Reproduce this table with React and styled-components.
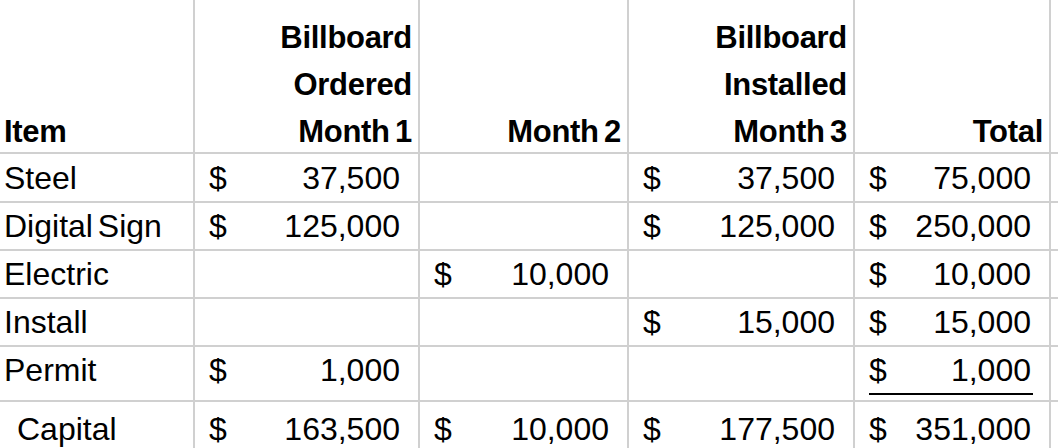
import React from 'react'
import styled, { createGlobalStyle, css } from 'styled-components'

const GlobalStyle = createGlobalStyle`
  html, body {
    margin: 0;
    padding: 0;
    background: #fff;
    overflow: hidden;
  }
  body {
    font-family: "Liberation Sans", Arial, sans-serif;
    color: #000;
  }
`;

const Sheet = styled.div`
  display: grid;
  grid-template-columns: 193px 223px 207px 224px 194px 1fr;
  grid-template-rows: 152px 47px 46px 46px 46px 53px 50px;
  gap: 2px;
  width: 1058px;
  background: #d0d0d0;
`;

const HeadCell = styled.div`
  background: #fff;
  display: flex;
  flex-direction: column;
  justify-content: flex-end;
  align-items: ${p => (p.$left ? 'flex-start' : 'flex-end')};
  padding: 0 6px 0 4px;
  font-weight: 700;
  font-size: 31px;
  line-height: 47px;
  letter-spacing: -0.3px;
`;

const HeadText = styled.div`
  margin-bottom: -3px;
  text-align: ${p => (p.$left ? 'left' : 'right')};
  word-spacing: -3px;
`;

const Cell = styled.div`
  background: #fff;
  display: flex;
  flex-direction: column;
  justify-content: flex-end;
  padding-bottom: ${p => (p.$tall ? 12 : 5)}px;
  font-size: 32px;
  line-height: 36px;
`;

const Label = styled.div`
  padding-left: ${p => (p.$indent ? 17 : 4)}px;
  white-space: nowrap;
  word-spacing: -4px;
`;

const Money = styled.div`
  display: flex;
  justify-content: space-between;
  margin: 0 16px 0 14px;
  padding-right: 2px;
  ${p => p.$underline && css`
    padding-bottom: 5px;
    margin-bottom: -7px;
    border-bottom: 2px solid #000;
  `}
`;

const rows = [
  { item: 'Steel', m1: '37,500', m3: '37,500', total: '75,000' },
  { item: 'Digital Sign', m1: '125,000', m3: '125,000', total: '250,000' },
  { item: 'Electric', m2: '10,000', total: '10,000' },
  { item: 'Install', m3: '15,000', total: '15,000' },
  { item: 'Permit', m1: '1,000', total: '1,000', tall: true, underlineTotal: true },
  { item: 'Capital', indent: true, m1: '163,500', m2: '10,000', m3: '177,500', total: '351,000' },
];

const heads = [
  ['Billboard', 'Ordered', 'Month 1'],
  ['Month 2'],
  ['Billboard', 'Installed', 'Month 3'],
  ['Total'],
];

const Amount = ({ value, underline }) => (
  <Money $underline={underline}>
    <span>$</span>
    <span>{value}</span>
  </Money>
);

export default function App() {
  return (
    <>
      <GlobalStyle />
      <Sheet>
        <HeadCell $left>
          <HeadText $left>Item</HeadText>
        </HeadCell>
        {heads.map((lines, i) => (
          <HeadCell key={i}>
            <HeadText>
              {lines.map((l, j) => (
                <div key={j}>{l}</div>
              ))}
            </HeadText>
          </HeadCell>
        ))}
        <HeadCell />

        {rows.map((r) => (
          <React.Fragment key={r.item}>
            <Cell $tall={r.tall}>
              <Label $indent={r.indent}>{r.item}</Label>
            </Cell>
            {['m1', 'm2', 'm3', 'total'].map((k) => (
              <Cell key={k} $tall={r.tall}>
                {r[k] && <Amount value={r[k]} underline={k === 'total' && r.underlineTotal} />}
              </Cell>
            ))}
            <Cell $tall={r.tall} />
          </React.Fragment>
        ))}
      </Sheet>
    </>
  )
}
